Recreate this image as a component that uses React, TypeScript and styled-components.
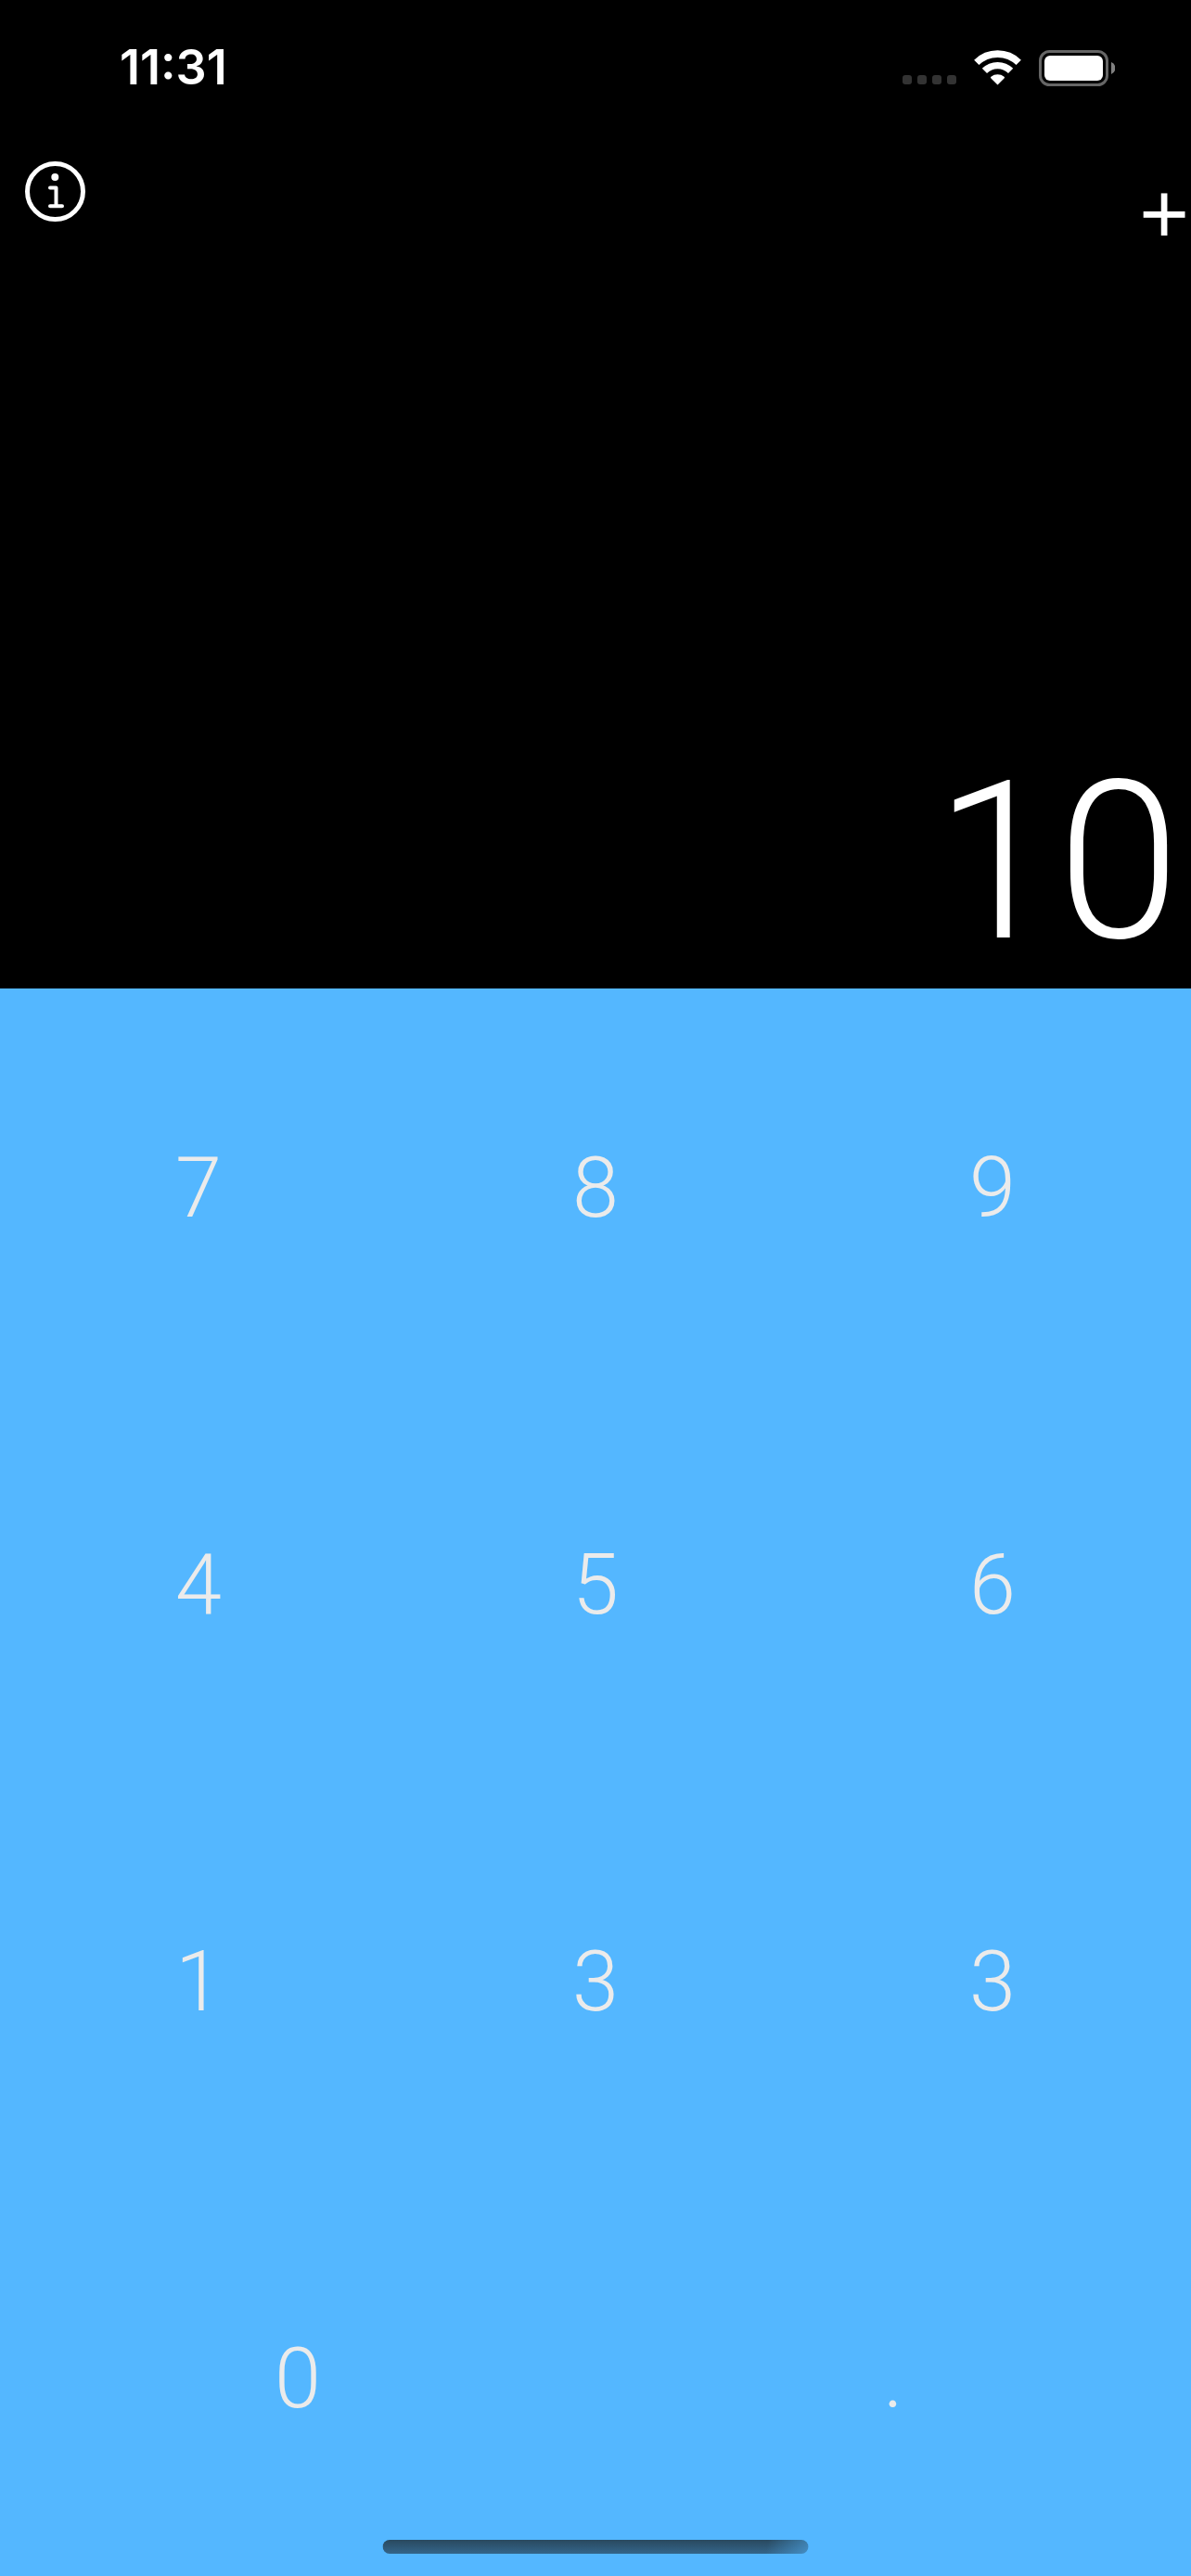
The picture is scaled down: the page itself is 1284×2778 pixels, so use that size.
import React, { useState } from "react";
import styled, { createGlobalStyle } from "styled-components";

const GlobalStyle = createGlobalStyle`
  *, *::before, *::after { box-sizing: border-box; }
  body { margin: 0; background: #000; }
  button { margin: 0; padding: 0; border: 0; background: none; color: inherit; font: inherit; cursor: pointer; }
`;

const Screen = styled.main`
  position: relative;
  display: flex;
  flex-direction: column;
  min-height: 100vh;
  background: #000;
  color: #fff;
  font-family: Roboto, "Liberation Sans", sans-serif;
  font-weight: 300;
`;

const StatusBar = styled.header`
  display: flex;
  justify-content: space-between;
  align-items: center;
  height: 146px;
  padding: 0 82px 0 129px;
`;

const Clock = styled.time`
  font-family: Inter, sans-serif;
  font-size: 52px;
  font-weight: 600;
  line-height: 60px;
`;

const StatusIcons = styled.div`
  display: flex;
  align-items: center;
  gap: 19px;
`;

const Toolbar = styled.div`
  display: flex;
  justify-content: space-between;
  align-items: flex-start;
  padding: 28px 2px 0 27px;
`;

const InfoButton = styled.button`
  display: flex;
`;

const OperatorButton = styled.button`
  font-family: "Liberation Sans", sans-serif;
  font-size: 92px;
  font-weight: 400;
  line-height: 112px;
`;

const Readout = styled.output`
  display: flex;
  flex: 1;
  justify-content: flex-end;
  align-items: flex-end;
  padding: 0 12px 8px;
  font-size: 238px;
  line-height: 256px;
`;

const Keypad = styled.section`
  display: grid;
  grid-template-columns: repeat(6, 1fr);
  grid-template-rows: repeat(4, 1fr);
  aspect-ratio: 3 / 4;
  background: #54b7ff;
  color: #ebebeb;
`;

const Key = styled.button<{ $span: number }>`
  grid-column: span ${(p) => p.$span};
  padding-top: 4px;
  font-size: 90px;
  line-height: 106px;
`;

const HomeIndicator = styled.div`
  position: absolute;
  bottom: 24px;
  left: 50%;
  width: 459px;
  max-width: 60%;
  height: 15px;
  border-radius: 8px;
  transform: translateX(-50%);
  background:
    linear-gradient(100deg, transparent 90%, rgba(84, 183, 255, 0.5) 100%),
    linear-gradient(#29495f, #34658a);
`;

const keys = [
  { label: "7", span: 2 },
  { label: "8", span: 2 },
  { label: "9", span: 2 },
  { label: "4", span: 2 },
  { label: "5", span: 2 },
  { label: "6", span: 2 },
  { label: "1", span: 2 },
  { label: "3", span: 2 },
  { label: "3", span: 2 },
  { label: "0", span: 3 },
  { label: ".", span: 3 },
];

const SignalIcon = () => (
  <svg width="58" height="38" viewBox="0 0 58 38" fill="#333" aria-hidden="true">
    {[0, 16, 32, 48].map((x) => (
      <rect key={x} x={x} y="27" width="10" height="10" rx="3" />
    ))}
  </svg>
);

const WifiIcon = () => (
  <svg width="51" height="38" viewBox="0 0 51 38" fill="none" aria-hidden="true">
    <path d="M2.8 13.4 A32.4 32.4 0 0 1 48.2 13.4" stroke="#fff" strokeWidth="7.6" />
    <path d="M11.4 22.4 A20 20 0 0 1 39.6 22.4" stroke="#fff" strokeWidth="7.4" />
    <path d="M25.5 37.5 L18.2 30.2 Q17.6 29.4 18.4 28.8 A11.6 11.6 0 0 1 32.6 28.8 Q33.4 29.4 32.8 30.2 Z" fill="#fff" />
  </svg>
);

const BatteryIcon = () => (
  <svg width="82" height="39" viewBox="0 0 82 39" aria-hidden="true">
    <rect x="1.5" y="1.5" width="72" height="36" rx="10" fill="none" stroke="#666" strokeWidth="3" />
    <rect x="6" y="6" width="63" height="27" rx="6" fill="#fff" />
    <path d="M78 13 A7 7 0 0 1 78 26 Z" fill="#808080" />
  </svg>
);

const InfoIcon = () => (
  <svg width="65" height="65" viewBox="0 0 65 65" fill="none" stroke="#fff" aria-hidden="true">
    <circle cx="32.5" cy="32.5" r="30" strokeWidth="5" />
    <circle cx="32.3" cy="17" r="4" fill="#fff" stroke="none" />
    <path d="M27 28.5 H33.5 V48 M27 48.3 H40" strokeWidth="4" strokeLinecap="round" strokeLinejoin="round" />
  </svg>
);

export default function App() {
  const [value, setValue] = useState("10");

  const press = (label: string) =>
    setValue((v) => (label === "." && v.includes(".") ? v : v + label));

  return (
    <>
      <GlobalStyle />
      <Screen>
        <StatusBar>
          <Clock>11:31</Clock>
          <StatusIcons>
            <SignalIcon />
            <WifiIcon />
            <BatteryIcon />
          </StatusIcons>
        </StatusBar>
        <Toolbar>
          <InfoButton type="button" aria-label="Info">
            <InfoIcon />
          </InfoButton>
          <OperatorButton type="button">+</OperatorButton>
        </Toolbar>
        <Readout>{value}</Readout>
        <Keypad aria-label="Keypad">
          {keys.map((key, index) => (
            <Key key={index} type="button" $span={key.span} onClick={() => press(key.label)}>
              {key.label}
            </Key>
          ))}
        </Keypad>
        <HomeIndicator />
      </Screen>
    </>
  );
}
